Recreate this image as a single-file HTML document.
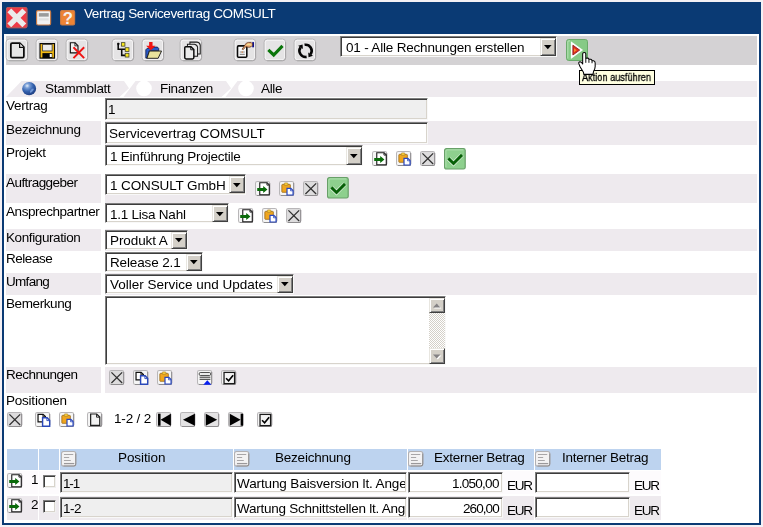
<!DOCTYPE html>
<html><head><meta charset="utf-8"><title>Vertrag Servicevertrag COMSULT</title>
<style>
html,body{margin:0;padding:0}
body{width:763px;height:527px;background:#f4f0f4;position:relative;overflow:hidden;font-family:"Liberation Sans",sans-serif;font-size:13px}
.t{position:absolute;white-space:nowrap;will-change:transform}
svg{overflow:visible}
.sel{position:absolute;box-sizing:border-box;background:#fff;border:1px solid;border-color:#7e7e7e #f8f8f8 #f8f8f8 #7e7e7e;box-shadow:inset 1px 1px 0 #3c3c3c,inset -1px -1px 0 #d8d4cc}
.ddb{position:absolute;box-sizing:border-box;background:#d4d0c8;border:1px solid;border-color:#e8e6e0 #404040 #404040 #e8e6e0;box-shadow:inset 1px 1px 0 #fff,inset -1px -1px 0 #808080}
.track{position:absolute;background-color:#fff;background-image:linear-gradient(45deg,#d4d0c8 25%,transparent 25%,transparent 75%,#d4d0c8 75%),linear-gradient(45deg,#d4d0c8 25%,transparent 25%,transparent 75%,#d4d0c8 75%);background-size:2px 2px;background-position:0 0,1px 1px}
.chk{position:absolute;width:12.5px;height:12.3px;box-sizing:border-box;background:#fff;border:1px solid;border-color:#7e7e7e #f0f0f0 #f0f0f0 #7e7e7e;box-shadow:inset 1px 1px 0 #3c3c3c,inset -1px -1px 0 #d8d4cc}
</style></head><body>
<div style="position:absolute;left:2px;top:2px;width:759px;height:523px;background:#fff;box-sizing:border-box;border:2px solid #0a3a74;"></div>
<div style="position:absolute;left:2px;top:2px;width:759px;height:32px;background:#0a3a74;"></div>
<svg style="position:absolute;left:6.4px;top:7.4px" width="21.4" height="21.2" viewBox="0 0 22 22" preserveAspectRatio="none"><rect x="0.5" y="0.5" width="21" height="21" rx="1.5" fill="#ee3a46" stroke="#bc5656"/><path d="M3.4 3.6 L18.8 19 M18.8 3.6 L3.4 19" stroke="#ebebeb" stroke-width="5.6"/><rect x="0.5" y="0.5" width="21" height="21" rx="1.5" fill="none" stroke="#bc5656"/></svg>
<svg style="position:absolute;left:36.3px;top:10.3px" width="15.2" height="15.6" viewBox="0 0 16 16" preserveAspectRatio="none"><rect x="0.6" y="0.6" width="14.8" height="14.8" rx="1.5" fill="#f2f2f2" stroke="#c87a44" stroke-width="1.2"/><rect x="3" y="3.2" width="10.4" height="3.6" fill="#9a9a9a"/><path d="M3 9.6 H13.4" stroke="#e0e0e0" stroke-width="2.4"/></svg>
<svg style="position:absolute;left:60.4px;top:10.3px" width="15.2" height="15.6" viewBox="0 0 16 16" preserveAspectRatio="none"><rect x="0.6" y="0.6" width="14.8" height="14.8" rx="1.5" fill="#ee8434" stroke="#c87a44" stroke-width="1.2"/><text x="8.3" y="14.4" text-anchor="middle" font-family="Liberation Sans, sans-serif" font-weight="bold" font-size="17.5" fill="#f6f2ee">?</text></svg>
<div class="t" style="left:84.00px;top:5.80px;font-size:13.5px;line-height:16px;color:#fff;letter-spacing:-0.387px;">Vertrag Servicevertrag COMSULT</div>
<div style="position:absolute;left:6px;top:36px;width:751px;height:28.7px;background:#d4d2d4;"></div>
<svg style="position:absolute;left:6.3px;top:39.099999999999994px" width="21.7" height="21.8" viewBox="0 0 21 21" preserveAspectRatio="none"><rect x="0.1" y="0.1" width="20.8" height="20.8" rx="3" fill="#f5f4f5" stroke="#b4b2b4" stroke-width="0.9"/><rect x="1.7" y="1.7" width="17.8" height="17.8" rx="1.6" fill="#e5e4e5"/><path d="M20.9 3 V18 Q20.9 20.9 18 20.9 H3" fill="none" stroke="#a8a6a8" stroke-width="0.9"/><path d="M6 4 H13.4 L17.3 7.9 V16.6 Q17.3 18 15.9 18 H6.1 Q4.7 18 4.7 16.6 V5.4 Q4.7 4 6 4 Z" fill="#e6e6e6" stroke="#0c0c0c" stroke-width="1.7" stroke-linejoin="round"/><path d="M13.2 4.2 V8.1 H17.1" fill="#fff" stroke="#0c0c0c" stroke-width="1.2"/></svg>
<svg style="position:absolute;left:36.2px;top:39.099999999999994px" width="21.7" height="21.8" viewBox="0 0 21 21" preserveAspectRatio="none"><rect x="0.1" y="0.1" width="20.8" height="20.8" rx="3" fill="#f5f4f5" stroke="#b4b2b4" stroke-width="0.9"/><rect x="1.7" y="1.7" width="17.8" height="17.8" rx="1.6" fill="#e5e4e5"/><path d="M20.9 3 V18 Q20.9 20.9 18 20.9 H3" fill="none" stroke="#a8a6a8" stroke-width="0.9"/><rect x="3.9" y="4.4" width="14" height="14" fill="#f6bc14" stroke="#0a0a0a" stroke-width="1.1"/><rect x="6.4" y="5.2" width="9.2" height="6.3" fill="#ececec" stroke="#3a3a3a" stroke-width="0.8"/><rect x="6.2" y="13.6" width="9.6" height="4.8" fill="#050505"/><rect x="13.3" y="14.4" width="2" height="3" fill="#fff"/></svg>
<svg style="position:absolute;left:66.2px;top:39.099999999999994px" width="21.7" height="21.8" viewBox="0 0 21 21" preserveAspectRatio="none"><rect x="0.1" y="0.1" width="20.8" height="20.8" rx="3" fill="#f5f4f5" stroke="#b4b2b4" stroke-width="0.9"/><rect x="1.7" y="1.7" width="17.8" height="17.8" rx="1.6" fill="#e5e4e5"/><path d="M20.9 3 V18 Q20.9 20.9 18 20.9 H3" fill="none" stroke="#a8a6a8" stroke-width="0.9"/><path d="M4.2 3.6 H8.8 L11.6 6.4 V13.4 H4.2 Z" fill="#f0f0f0" stroke="#111" stroke-width="1.1"/><path d="M8.6 3.6 V6.6 H11.6" fill="none" stroke="#111" stroke-width="0.8"/><path d="M7.2 8 L17.6 18.4 M17.6 8 L7.2 18.4" stroke="#f01414" stroke-width="1.9"/></svg>
<svg style="position:absolute;left:112.3px;top:39.099999999999994px" width="21.7" height="21.8" viewBox="0 0 21 21" preserveAspectRatio="none"><rect x="0.1" y="0.1" width="20.8" height="20.8" rx="3" fill="#f5f4f5" stroke="#b4b2b4" stroke-width="0.9"/><rect x="1.7" y="1.7" width="17.8" height="17.8" rx="1.6" fill="#e5e4e5"/><path d="M20.9 3 V18 Q20.9 20.9 18 20.9 H3" fill="none" stroke="#a8a6a8" stroke-width="0.9"/><path d="M6 5.6 V9.8 H13 M9.4 9.8 V15.8 H13" fill="none" stroke="#0a0a0a" stroke-width="1.5"/><rect x="5" y="3.6" width="2.1" height="2.4" rx="0.6" fill="#0a0a0a"/><rect x="9.1" y="3.5" width="3.4" height="3.4" fill="#f8e81c" stroke="#4a4a30" stroke-width="0.8"/><rect x="12.8" y="8.4" width="3.6" height="3.6" fill="#f8e81c" stroke="#4a4a30" stroke-width="0.8"/><rect x="12.8" y="13.8" width="3.6" height="3.6" fill="#f8e81c" stroke="#4a4a30" stroke-width="0.8"/></svg>
<svg style="position:absolute;left:142.29999999999998px;top:39.099999999999994px" width="21.7" height="21.8" viewBox="0 0 21 21" preserveAspectRatio="none"><rect x="0.1" y="0.1" width="20.8" height="20.8" rx="3" fill="#f5f4f5" stroke="#b4b2b4" stroke-width="0.9"/><rect x="1.7" y="1.7" width="17.8" height="17.8" rx="1.6" fill="#e5e4e5"/><path d="M20.9 3 V18 Q20.9 20.9 18 20.9 H3" fill="none" stroke="#a8a6a8" stroke-width="0.9"/><path d="M3.7 18.4 V10.4 L5 9 H10.2 L11.2 7.8 H15 L16.2 9.2 V11.4 H7 L4.8 18.4 Z" fill="#2a5ac8" stroke="#0c1c50" stroke-width="0.8"/><path d="M4.8 18.6 L7.2 11.6 H18.9 L15.6 18.6 Z" fill="#e8e29c" stroke="#1a1a1a" stroke-width="0.9"/><path d="M6.9 3 H10.2 V6.4 H13.1 L8.55 10.9 L4 6.4 H6.9 Z" fill="#f01414"/></svg>
<svg style="position:absolute;left:179.89999999999998px;top:39.099999999999994px" width="21.7" height="21.8" viewBox="0 0 21 21" preserveAspectRatio="none"><rect x="0.1" y="0.1" width="20.8" height="20.8" rx="3" fill="#f5f4f5" stroke="#b4b2b4" stroke-width="0.9"/><rect x="1.7" y="1.7" width="17.8" height="17.8" rx="1.6" fill="#e5e4e5"/><path d="M20.9 3 V18 Q20.9 20.9 18 20.9 H3" fill="none" stroke="#a8a6a8" stroke-width="0.9"/><path d="M9.6 3 H16.4 Q19.4 3.6 19.6 6 V14.4 H9.6 Z" fill="#e8e8e8" stroke="#1a1a1a" stroke-width="1"/><path d="M7.2 5 H14 Q16.8 5.6 17 8 V16.6 H7.2 Z" fill="#e8e8e8" stroke="#1a1a1a" stroke-width="1"/><path d="M5.6 7.4 H10.6 L13.4 10.2 V17.9 Q13.4 19.2 12.1 19.2 H5.9 Q4.6 19.2 4.6 17.9 V8.4 Q4.6 7.4 5.6 7.4 Z" fill="#ebebeb" stroke="#0a0a0a" stroke-width="1.4"/><path d="M10.4 7.6 V10.4 H13.2" fill="none" stroke="#0a0a0a" stroke-width="0.9"/></svg>
<svg style="position:absolute;left:234.29999999999998px;top:39.099999999999994px" width="21.7" height="21.8" viewBox="0 0 21 21" preserveAspectRatio="none"><rect x="0.1" y="0.1" width="20.8" height="20.8" rx="3" fill="#f5f4f5" stroke="#b4b2b4" stroke-width="0.9"/><rect x="1.7" y="1.7" width="17.8" height="17.8" rx="1.6" fill="#e5e4e5"/><path d="M20.9 3 V18 Q20.9 20.9 18 20.9 H3" fill="none" stroke="#a8a6a8" stroke-width="0.9"/><rect x="3.4" y="6.6" width="9" height="11" rx="1" fill="#f8f8f8" stroke="#0a0a0a" stroke-width="1.5"/><path d="M5.6 12.6 H10.4 M5.6 14.8 H10.4" stroke="#8e8e8e" stroke-width="1"/><rect x="7.4" y="12.1" width="1.2" height="1" fill="#e8782a"/><rect x="17.6" y="3" width="1.8" height="5" fill="#12128a"/><path d="M7.9 9.8 L10.6 5.8 Q11.6 3.4 14 3.3 H16.6 Q18.2 4.2 17.8 6 Q17 7.8 14.6 8 L11.4 7.4 L9 10.2 Z" fill="#eeb07a" stroke="#5a2a10" stroke-width="0.7"/><path d="M12.6 5.4 Q15 4.6 17 6" fill="none" stroke="#f4e090" stroke-width="1.2"/></svg>
<svg style="position:absolute;left:264.09999999999997px;top:39.099999999999994px" width="21.7" height="21.8" viewBox="0 0 21 21" preserveAspectRatio="none"><rect x="0.1" y="0.1" width="20.8" height="20.8" rx="3" fill="#f5f4f5" stroke="#b4b2b4" stroke-width="0.9"/><rect x="1.7" y="1.7" width="17.8" height="17.8" rx="1.6" fill="#e5e4e5"/><path d="M20.9 3 V18 Q20.9 20.9 18 20.9 H3" fill="none" stroke="#a8a6a8" stroke-width="0.9"/><path d="M4.2 10.4 L9.4 15.4 L17.9 6.6" fill="none" stroke="#0a750a" stroke-width="3" stroke-linejoin="miter"/></svg>
<svg style="position:absolute;left:294.09999999999997px;top:39.099999999999994px" width="21.7" height="21.8" viewBox="0 0 21 21" preserveAspectRatio="none"><rect x="0.1" y="0.1" width="20.8" height="20.8" rx="3" fill="#f5f4f5" stroke="#b4b2b4" stroke-width="0.9"/><rect x="1.7" y="1.7" width="17.8" height="17.8" rx="1.6" fill="#e5e4e5"/><path d="M20.9 3 V18 Q20.9 20.9 18 20.9 H3" fill="none" stroke="#a8a6a8" stroke-width="0.9"/><path d="M12.2 17.2 A5.9 5.9 0 0 1 6.37 8.02" fill="none" stroke="#050505" stroke-width="2.5"/><path d="M10.2 5.6 A5.9 5.9 0 0 1 16.03 14.78" fill="none" stroke="#050505" stroke-width="2.5"/><path d="M8.3 5.2 L4.0 6.6 L8.6 9.7 Z" fill="#050505"/><path d="M14.1 17.6 L18.4 16.2 L13.8 13.1 Z" fill="#050505"/></svg>
<div class="sel" style="left:340.2px;top:36.2px;width:216.4px;height:20.6px"></div>
<div class="ddb" style="left:539.6px;top:38.1px;width:16.1px;height:17.7px"></div>
<svg style="position:absolute;left:543.5px;top:45.05px" width="7.6" height="4.2" viewBox="0 0 7.6 4.2" preserveAspectRatio="none"><path d="M0 0 H7.6 L3.8 4.2 Z" fill="#000"/></svg>
<div class="t" style="left:345.50px;top:39.80px;font-size:13.5px;line-height:16px;letter-spacing:-0.186px;">01 - Alle Rechnungen erstellen</div>
<svg style="position:absolute;left:566.1px;top:38.9px" width="22" height="22" viewBox="0 0 22 22" preserveAspectRatio="none"><rect x="0.5" y="0.5" width="21" height="21" rx="2.2" fill="#86ca86" stroke="#6aaa6a"/><path d="M1.8 19.5 V3 Q1.8 1.8 3 1.8 H4" fill="none" stroke="#b0deb0" stroke-width="1.2"/><path d="M4.9 2.2 L17.1 11.1 L4.9 20 Z" fill="#fcfcfc"/><path d="M6.9 6.2 L13.7 11.1 L6.9 16 Z" fill="#e42a1a" stroke="#8e2424" stroke-width="0.9"/><path d="M8 9.2 L10.8 11.2 L8 13.2 Z" fill="#f08a30"/></svg>
<div style="position:absolute;left:6px;top:80.8px;width:751px;height:16px;background:#eeeaee;"></div>
<svg style="position:absolute;left:6px;top:80.8px" width="17" height="16" viewBox="0 0 17 16" preserveAspectRatio="none"><path d="M0 0 H15.5 L0 16 Z" fill="#fff"/></svg>
<svg style="position:absolute;left:21.8px;top:81.8px" width="14.3" height="13.4" viewBox="0 0 14.3 13.4" preserveAspectRatio="none"><defs><radialGradient id="sg" cx="0.36" cy="0.28" r="0.78"><stop offset="0" stop-color="#e4eefa"/><stop offset="0.22" stop-color="#7a9ed6"/><stop offset="0.55" stop-color="#3462ae"/><stop offset="1" stop-color="#1c3a7c"/></radialGradient></defs><ellipse cx="7.15" cy="6.7" rx="7" ry="6.6" fill="url(#sg)"/><ellipse cx="9.8" cy="8.6" rx="2.6" ry="1.1" transform="rotate(-48 9.8 8.6)" fill="#86aae4" opacity="0.75"/></svg>
<svg style="position:absolute;left:118px;top:80.8px" width="36" height="16" viewBox="0 0 36 16"><path d="M1.5 16 L5.5 16 L17.5 0 L6 0 L11 7.2 Z" fill="#fff"/><circle cx="26" cy="7.4" r="7.8" fill="#fff"/></svg>
<svg style="position:absolute;left:220px;top:80.8px" width="36" height="16" viewBox="0 0 36 16"><path d="M1.5 16 L5.5 16 L17.5 0 L6 0 L11 7.2 Z" fill="#fff"/><circle cx="26" cy="7.4" r="7.8" fill="#fff"/></svg>
<div class="t" style="left:45.00px;top:80.80px;font-size:13.5px;line-height:16px;letter-spacing:-0.269px;">Stammblatt</div>
<div class="t" style="left:159.80px;top:80.80px;font-size:13.5px;line-height:16px;letter-spacing:-0.333px;">Finanzen</div>
<div class="t" style="left:261.10px;top:80.80px;font-size:13.5px;line-height:16px;letter-spacing:-0.334px;">Alle</div>
<div style="position:absolute;left:6px;top:120.8px;width:95px;height:23.8px;background:#eeeaee;"></div>
<div style="position:absolute;left:105px;top:120.8px;width:652px;height:23.8px;background:#eeeaee;"></div>
<div style="position:absolute;left:6px;top:173.9px;width:95px;height:28.7px;background:#eeeaee;"></div>
<div style="position:absolute;left:105px;top:173.9px;width:652px;height:28.7px;background:#eeeaee;"></div>
<div style="position:absolute;left:6px;top:229px;width:95px;height:21.6px;background:#eeeaee;"></div>
<div style="position:absolute;left:105px;top:229px;width:652px;height:21.6px;background:#eeeaee;"></div>
<div style="position:absolute;left:6px;top:272.8px;width:95px;height:21.8px;background:#eeeaee;"></div>
<div style="position:absolute;left:105px;top:272.8px;width:652px;height:21.8px;background:#eeeaee;"></div>
<div style="position:absolute;left:6px;top:366.8px;width:95px;height:25.8px;background:#eeeaee;"></div>
<div style="position:absolute;left:105px;top:366.8px;width:652px;height:25.8px;background:#eeeaee;"></div>
<div class="t" style="left:6.10px;top:97.80px;font-size:13.5px;line-height:16px;letter-spacing:-0.303px;">Vertrag</div>
<div class="t" style="left:5.90px;top:121.80px;font-size:13.5px;line-height:16px;letter-spacing:-0.305px;">Bezeichnung</div>
<div class="t" style="left:5.90px;top:144.80px;font-size:13.5px;line-height:16px;letter-spacing:-0.344px;">Projekt</div>
<div class="t" style="left:6.30px;top:174.80px;font-size:13.5px;line-height:16px;letter-spacing:-0.560px;">Auftraggeber</div>
<div class="t" style="left:6.30px;top:203.80px;font-size:13.5px;line-height:16px;letter-spacing:-0.436px;">Ansprechpartner</div>
<div class="t" style="left:5.90px;top:229.80px;font-size:13.5px;line-height:16px;letter-spacing:-0.396px;">Konfiguration</div>
<div class="t" style="left:5.90px;top:250.80px;font-size:13.5px;line-height:16px;letter-spacing:-0.470px;">Release</div>
<div class="t" style="left:5.90px;top:273.80px;font-size:13.5px;line-height:16px;letter-spacing:-0.692px;">Umfang</div>
<div class="t" style="left:5.90px;top:295.80px;font-size:13.5px;line-height:16px;letter-spacing:-0.403px;">Bemerkung</div>
<div class="t" style="left:5.80px;top:366.80px;font-size:13.5px;line-height:16px;letter-spacing:-0.495px;">Rechnungen</div>
<div class="t" style="left:5.80px;top:392.80px;font-size:13.5px;line-height:16px;letter-spacing:-0.226px;">Positionen</div>
<div class="sel" style="left:105.1px;top:97.9px;width:322.8px;height:21.8px;background:#efefef"></div>
<div class="t" style="left:107.80px;top:101.80px;font-size:13.5px;line-height:16px;">1</div>
<div class="sel" style="left:105.1px;top:121.8px;width:322.8px;height:22.2px;background:#fff"></div>
<div class="t" style="left:108.50px;top:125.80px;font-size:13.5px;line-height:16px;letter-spacing:-0.007px;">Servicevertrag COMSULT</div>
<div class="sel" style="left:105.1px;top:145px;width:258.1px;height:21px"></div>
<div class="ddb" style="left:346.2px;top:146.9px;width:16.1px;height:18.1px"></div>
<svg style="position:absolute;left:350.1px;top:154.05px" width="7.6" height="4.2" viewBox="0 0 7.6 4.2" preserveAspectRatio="none"><path d="M0 0 H7.6 L3.8 4.2 Z" fill="#000"/></svg>
<div class="t" style="left:109.90px;top:148.80px;font-size:13.5px;line-height:16px;letter-spacing:-0.228px;">1 Einführung Projectile</div>
<svg style="position:absolute;left:372.1px;top:151.3px" width="15.2" height="15" viewBox="0 0 15 15" preserveAspectRatio="none"><rect x="0.5" y="0.5" width="14" height="14" rx="1.8" fill="#f5f5f5" stroke="#b8b6b8"/><path d="M14.5 2 V13 Q14.5 14.5 13 14.5 H2" fill="none" stroke="#8e8c8e"/><path d="M4.7 1.8 H12 L14.1 3.9 V13.7 H4.7 Z" fill="#fff" stroke="#1c1c1c" stroke-width="1.1"/><path d="M11.8 1.8 V4.1 H14.1" fill="none" stroke="#1c1c1c" stroke-width="0.9"/><path d="M2.2 7 H8.1 V4.9 L12.3 8.5 L8.1 12.1 V10 H2.2 Z" fill="#0a6a0a"/></svg>
<svg style="position:absolute;left:396.3px;top:151.3px" width="15.2" height="15" viewBox="0 0 15 15" preserveAspectRatio="none"><rect x="0.5" y="0.5" width="14" height="14" rx="1.8" fill="#f5f5f5" stroke="#b8b6b8"/><path d="M14.5 2 V13 Q14.5 14.5 13 14.5 H2" fill="none" stroke="#8e8c8e"/><rect x="2.8" y="3.4" width="8.4" height="7.9" rx="0.6" fill="#f0a61e" stroke="#9a6a18" stroke-width="0.8"/><rect x="5.2" y="1.9" width="3.6" height="2.5" rx="0.6" fill="#f6cc3a" stroke="#a87a20" stroke-width="0.6"/><path d="M7.9 7.3 H11.7 L13.9 9.5 V14 H7.9 Z" fill="#fff" stroke="#2a48c0" stroke-width="1.2"/><path d="M11.4 7.5 V9.8 H13.7" fill="none" stroke="#2a48c0" stroke-width="0.8"/></svg>
<svg style="position:absolute;left:420.4px;top:151.3px" width="15.2" height="15" viewBox="0 0 15 15" preserveAspectRatio="none"><rect x="0.5" y="0.5" width="14" height="14" rx="1.8" fill="#dddcdd" stroke="#b8b6b8"/><path d="M14.5 2 V13 Q14.5 14.5 13 14.5 H2" fill="none" stroke="#8e8c8e"/><path d="M2.4 2.4 L13 13 M13 2.4 L2.4 13" stroke="#303030" stroke-width="1.25"/></svg>
<svg style="position:absolute;left:444.2px;top:148px" width="21.8" height="21.6" viewBox="0 0 22 22" preserveAspectRatio="none"><rect x="0.6" y="0.6" width="20.8" height="20.8" rx="1.8" fill="#8ed08e" stroke="#68a068" stroke-width="1.2"/><path d="M1.9 19.6 V3 Q1.9 1.9 3 1.9 H19.6" fill="none" stroke="#b2e2b2"/><path d="M4.4 10.6 L9.6 15.8 L18.2 7" fill="none" stroke="#f4fbf4" stroke-width="4.3" stroke-opacity="0.9"/><path d="M4.4 10.6 L9.6 15.8 L18.2 7" fill="none" stroke="#066006" stroke-width="3"/></svg>
<div class="sel" style="left:105.1px;top:174px;width:141px;height:20.5px"></div>
<div class="ddb" style="left:229.1px;top:175.9px;width:16.1px;height:17.6px"></div>
<svg style="position:absolute;left:233.0px;top:182.8px" width="7.6" height="4.2" viewBox="0 0 7.6 4.2" preserveAspectRatio="none"><path d="M0 0 H7.6 L3.8 4.2 Z" fill="#000"/></svg>
<div class="t" style="left:109.90px;top:177.80px;font-size:13.5px;line-height:16px;letter-spacing:-0.121px;">1 CONSULT GmbH</div>
<svg style="position:absolute;left:255px;top:180.5px" width="15.2" height="15" viewBox="0 0 15 15" preserveAspectRatio="none"><rect x="0.5" y="0.5" width="14" height="14" rx="1.8" fill="#f5f5f5" stroke="#b8b6b8"/><path d="M14.5 2 V13 Q14.5 14.5 13 14.5 H2" fill="none" stroke="#8e8c8e"/><path d="M4.7 1.8 H12 L14.1 3.9 V13.7 H4.7 Z" fill="#fff" stroke="#1c1c1c" stroke-width="1.1"/><path d="M11.8 1.8 V4.1 H14.1" fill="none" stroke="#1c1c1c" stroke-width="0.9"/><path d="M2.2 7 H8.1 V4.9 L12.3 8.5 L8.1 12.1 V10 H2.2 Z" fill="#0a6a0a"/></svg>
<svg style="position:absolute;left:279.2px;top:180.5px" width="15.2" height="15" viewBox="0 0 15 15" preserveAspectRatio="none"><rect x="0.5" y="0.5" width="14" height="14" rx="1.8" fill="#f5f5f5" stroke="#b8b6b8"/><path d="M14.5 2 V13 Q14.5 14.5 13 14.5 H2" fill="none" stroke="#8e8c8e"/><rect x="2.8" y="3.4" width="8.4" height="7.9" rx="0.6" fill="#f0a61e" stroke="#9a6a18" stroke-width="0.8"/><rect x="5.2" y="1.9" width="3.6" height="2.5" rx="0.6" fill="#f6cc3a" stroke="#a87a20" stroke-width="0.6"/><path d="M7.9 7.3 H11.7 L13.9 9.5 V14 H7.9 Z" fill="#fff" stroke="#2a48c0" stroke-width="1.2"/><path d="M11.4 7.5 V9.8 H13.7" fill="none" stroke="#2a48c0" stroke-width="0.8"/></svg>
<svg style="position:absolute;left:303.2px;top:180.5px" width="15.2" height="15" viewBox="0 0 15 15" preserveAspectRatio="none"><rect x="0.5" y="0.5" width="14" height="14" rx="1.8" fill="#dddcdd" stroke="#b8b6b8"/><path d="M14.5 2 V13 Q14.5 14.5 13 14.5 H2" fill="none" stroke="#8e8c8e"/><path d="M2.4 2.4 L13 13 M13 2.4 L2.4 13" stroke="#303030" stroke-width="1.25"/></svg>
<svg style="position:absolute;left:327px;top:177.2px" width="21.8" height="21.6" viewBox="0 0 22 22" preserveAspectRatio="none"><rect x="0.6" y="0.6" width="20.8" height="20.8" rx="1.8" fill="#8ed08e" stroke="#68a068" stroke-width="1.2"/><path d="M1.9 19.6 V3 Q1.9 1.9 3 1.9 H19.6" fill="none" stroke="#b2e2b2"/><path d="M4.4 10.6 L9.6 15.8 L18.2 7" fill="none" stroke="#f4fbf4" stroke-width="4.3" stroke-opacity="0.9"/><path d="M4.4 10.6 L9.6 15.8 L18.2 7" fill="none" stroke="#066006" stroke-width="3"/></svg>
<div class="sel" style="left:105.1px;top:203.3px;width:123.6px;height:20.2px"></div>
<div class="ddb" style="left:211.7px;top:205.2px;width:16.1px;height:17.3px"></div>
<svg style="position:absolute;left:215.6px;top:211.95px" width="7.6" height="4.2" viewBox="0 0 7.6 4.2" preserveAspectRatio="none"><path d="M0 0 H7.6 L3.8 4.2 Z" fill="#000"/></svg>
<div class="t" style="left:109.60px;top:206.80px;font-size:13.5px;line-height:16px;letter-spacing:-0.242px;">1.1 Lisa Nahl</div>
<svg style="position:absolute;left:238.2px;top:208.2px" width="15.2" height="15" viewBox="0 0 15 15" preserveAspectRatio="none"><rect x="0.5" y="0.5" width="14" height="14" rx="1.8" fill="#f5f5f5" stroke="#b8b6b8"/><path d="M14.5 2 V13 Q14.5 14.5 13 14.5 H2" fill="none" stroke="#8e8c8e"/><path d="M4.7 1.8 H12 L14.1 3.9 V13.7 H4.7 Z" fill="#fff" stroke="#1c1c1c" stroke-width="1.1"/><path d="M11.8 1.8 V4.1 H14.1" fill="none" stroke="#1c1c1c" stroke-width="0.9"/><path d="M2.2 7 H8.1 V4.9 L12.3 8.5 L8.1 12.1 V10 H2.2 Z" fill="#0a6a0a"/></svg>
<svg style="position:absolute;left:262.3px;top:208.2px" width="15.2" height="15" viewBox="0 0 15 15" preserveAspectRatio="none"><rect x="0.5" y="0.5" width="14" height="14" rx="1.8" fill="#f5f5f5" stroke="#b8b6b8"/><path d="M14.5 2 V13 Q14.5 14.5 13 14.5 H2" fill="none" stroke="#8e8c8e"/><rect x="2.8" y="3.4" width="8.4" height="7.9" rx="0.6" fill="#f0a61e" stroke="#9a6a18" stroke-width="0.8"/><rect x="5.2" y="1.9" width="3.6" height="2.5" rx="0.6" fill="#f6cc3a" stroke="#a87a20" stroke-width="0.6"/><path d="M7.9 7.3 H11.7 L13.9 9.5 V14 H7.9 Z" fill="#fff" stroke="#2a48c0" stroke-width="1.2"/><path d="M11.4 7.5 V9.8 H13.7" fill="none" stroke="#2a48c0" stroke-width="0.8"/></svg>
<svg style="position:absolute;left:286.4px;top:208.2px" width="15.2" height="15" viewBox="0 0 15 15" preserveAspectRatio="none"><rect x="0.5" y="0.5" width="14" height="14" rx="1.8" fill="#dddcdd" stroke="#b8b6b8"/><path d="M14.5 2 V13 Q14.5 14.5 13 14.5 H2" fill="none" stroke="#8e8c8e"/><path d="M2.4 2.4 L13 13 M13 2.4 L2.4 13" stroke="#303030" stroke-width="1.25"/></svg>
<div class="sel" style="left:105.1px;top:229.7px;width:82.7px;height:20px"></div>
<div class="ddb" style="left:170.8px;top:231.6px;width:16.1px;height:17.1px"></div>
<svg style="position:absolute;left:174.7px;top:238.25px" width="7.6" height="4.2" viewBox="0 0 7.6 4.2" preserveAspectRatio="none"><path d="M0 0 H7.6 L3.8 4.2 Z" fill="#000"/></svg>
<div class="t" style="left:109.60px;top:232.80px;font-size:13.5px;line-height:16px;letter-spacing:-0.084px;">Produkt A</div>
<div class="sel" style="left:105.1px;top:251.9px;width:97.5px;height:20px"></div>
<div class="ddb" style="left:185.6px;top:253.8px;width:16.1px;height:17.1px"></div>
<svg style="position:absolute;left:189.5px;top:260.45px" width="7.6" height="4.2" viewBox="0 0 7.6 4.2" preserveAspectRatio="none"><path d="M0 0 H7.6 L3.8 4.2 Z" fill="#000"/></svg>
<div class="t" style="left:109.60px;top:254.80px;font-size:13.5px;line-height:16px;letter-spacing:-0.134px;">Release 2.1</div>
<div class="sel" style="left:105.1px;top:273.7px;width:188.5px;height:20px"></div>
<div class="ddb" style="left:276.6px;top:275.6px;width:16.1px;height:17.1px"></div>
<svg style="position:absolute;left:280.5px;top:282.25px" width="7.6" height="4.2" viewBox="0 0 7.6 4.2" preserveAspectRatio="none"><path d="M0 0 H7.6 L3.8 4.2 Z" fill="#000"/></svg>
<div class="t" style="left:109.80px;top:276.80px;font-size:13.5px;line-height:16px;">Voller Service und Updates</div>
<div class="sel" style="left:105.1px;top:296px;width:341px;height:69.2px;background:#fff"></div>
<div class="track" style="left:429.2px;top:297.8px;width:15.6px;height:66px"></div>
<div class="ddb" style="left:429.2px;top:297.8px;width:15.6px;height:15.6px"></div>
<div class="ddb" style="left:429.2px;top:348.2px;width:15.6px;height:15.6px"></div>
<svg style="position:absolute;left:433px;top:303px" width="9" height="6" viewBox="0 0 9 6" preserveAspectRatio="none"><path d="M1 5.6 H8.4 L4.7 1.4 Z" fill="#fff"/><path d="M0 4.6 H7.4 L3.7 0.4 Z" fill="#848284"/></svg>
<svg style="position:absolute;left:433px;top:353.6px" width="9" height="6" viewBox="0 0 9 6" preserveAspectRatio="none"><path d="M1 1.4 H8.4 L4.7 5.6 Z" fill="#fff"/><path d="M0 0.4 H7.4 L3.7 4.6 Z" fill="#848284"/></svg>
<svg style="position:absolute;left:109.2px;top:369.8px" width="15.2" height="15" viewBox="0 0 15 15" preserveAspectRatio="none"><rect x="0.5" y="0.5" width="14" height="14" rx="1.8" fill="#dddcdd" stroke="#b8b6b8"/><path d="M14.5 2 V13 Q14.5 14.5 13 14.5 H2" fill="none" stroke="#8e8c8e"/><path d="M2.4 2.4 L13 13 M13 2.4 L2.4 13" stroke="#303030" stroke-width="1.25"/></svg>
<svg style="position:absolute;left:133.2px;top:369.8px" width="15.2" height="15" viewBox="0 0 15 15" preserveAspectRatio="none"><rect x="0.5" y="0.5" width="14" height="14" rx="1.8" fill="#f5f5f5" stroke="#b8b6b8"/><path d="M14.5 2 V13 Q14.5 14.5 13 14.5 H2" fill="none" stroke="#8e8c8e"/><path d="M3 2.3 H8 L10.3 4.6 V9.9 H3 Z" fill="#fff" stroke="#111" stroke-width="1.2"/><path d="M7.8 2.3 V4.8 H10.3" fill="none" stroke="#111" stroke-width="0.9"/><path d="M7.5 5.8 H12 L14.5 8.3 V14.2 H7.5 Z" fill="#fff" stroke="#2a48b8" stroke-width="1.4"/><path d="M11.7 6 V8.6 H14.3" fill="none" stroke="#2a48b8" stroke-width="0.9"/></svg>
<svg style="position:absolute;left:157.2px;top:369.8px" width="15.2" height="15" viewBox="0 0 15 15" preserveAspectRatio="none"><rect x="0.5" y="0.5" width="14" height="14" rx="1.8" fill="#f5f5f5" stroke="#b8b6b8"/><path d="M14.5 2 V13 Q14.5 14.5 13 14.5 H2" fill="none" stroke="#8e8c8e"/><rect x="2.8" y="3.4" width="8.4" height="7.9" rx="0.6" fill="#f0a61e" stroke="#9a6a18" stroke-width="0.8"/><rect x="5.2" y="1.9" width="3.6" height="2.5" rx="0.6" fill="#f6cc3a" stroke="#a87a20" stroke-width="0.6"/><path d="M7.9 7.3 H11.7 L13.9 9.5 V14 H7.9 Z" fill="#fff" stroke="#2a48c0" stroke-width="1.2"/><path d="M11.4 7.5 V9.8 H13.7" fill="none" stroke="#2a48c0" stroke-width="0.8"/></svg>
<svg style="position:absolute;left:197px;top:369.8px" width="15.2" height="15" viewBox="0 0 15 15" preserveAspectRatio="none"><rect x="0.5" y="0.5" width="14" height="14" rx="1.8" fill="#f5f5f5" stroke="#b8b6b8"/><path d="M14.5 2 V13 Q14.5 14.5 13 14.5 H2" fill="none" stroke="#8e8c8e"/><rect x="2.2" y="2.6" width="11.2" height="2.8" rx="1" fill="#fff" stroke="#2a2a2a" stroke-width="0.9"/><path d="M2.6 7.2 H13.2 M2.6 9.3 H13.2" stroke="#1c1c1c" stroke-width="0.9"/><path d="M10.2 10.2 L14.2 14.8 H6.2 Z" fill="#0820f0"/></svg>
<svg style="position:absolute;left:221px;top:369.8px" width="15.2" height="15" viewBox="0 0 15 15" preserveAspectRatio="none"><rect x="0.5" y="0.5" width="14" height="14" rx="1.8" fill="#f5f5f5" stroke="#b8b6b8"/><path d="M14.5 2 V13 Q14.5 14.5 13 14.5 H2" fill="none" stroke="#8e8c8e"/><rect x="3" y="2.4" width="10.4" height="11.2" fill="#f4f4f4" stroke="#1a1a1a" stroke-width="1.25"/><path d="M5 8.3 L7.5 10.8 L12 5.2" fill="none" stroke="#000" stroke-width="1.6"/></svg>
<svg style="position:absolute;left:7.2px;top:412.3px" width="15.2" height="15" viewBox="0 0 15 15" preserveAspectRatio="none"><rect x="0.5" y="0.5" width="14" height="14" rx="1.8" fill="#dddcdd" stroke="#b8b6b8"/><path d="M14.5 2 V13 Q14.5 14.5 13 14.5 H2" fill="none" stroke="#8e8c8e"/><path d="M2.4 2.4 L13 13 M13 2.4 L2.4 13" stroke="#303030" stroke-width="1.25"/></svg>
<svg style="position:absolute;left:35.2px;top:412.3px" width="15.2" height="15" viewBox="0 0 15 15" preserveAspectRatio="none"><rect x="0.5" y="0.5" width="14" height="14" rx="1.8" fill="#f5f5f5" stroke="#b8b6b8"/><path d="M14.5 2 V13 Q14.5 14.5 13 14.5 H2" fill="none" stroke="#8e8c8e"/><path d="M3 2.3 H8 L10.3 4.6 V9.9 H3 Z" fill="#fff" stroke="#111" stroke-width="1.2"/><path d="M7.8 2.3 V4.8 H10.3" fill="none" stroke="#111" stroke-width="0.9"/><path d="M7.5 5.8 H12 L14.5 8.3 V14.2 H7.5 Z" fill="#fff" stroke="#2a48b8" stroke-width="1.4"/><path d="M11.7 6 V8.6 H14.3" fill="none" stroke="#2a48b8" stroke-width="0.9"/></svg>
<svg style="position:absolute;left:59.3px;top:412.3px" width="15.2" height="15" viewBox="0 0 15 15" preserveAspectRatio="none"><rect x="0.5" y="0.5" width="14" height="14" rx="1.8" fill="#f5f5f5" stroke="#b8b6b8"/><path d="M14.5 2 V13 Q14.5 14.5 13 14.5 H2" fill="none" stroke="#8e8c8e"/><rect x="2.8" y="3.4" width="8.4" height="7.9" rx="0.6" fill="#f0a61e" stroke="#9a6a18" stroke-width="0.8"/><rect x="5.2" y="1.9" width="3.6" height="2.5" rx="0.6" fill="#f6cc3a" stroke="#a87a20" stroke-width="0.6"/><path d="M7.9 7.3 H11.7 L13.9 9.5 V14 H7.9 Z" fill="#fff" stroke="#2a48c0" stroke-width="1.2"/><path d="M11.4 7.5 V9.8 H13.7" fill="none" stroke="#2a48c0" stroke-width="0.8"/></svg>
<svg style="position:absolute;left:87.4px;top:412.3px" width="15.2" height="15" viewBox="0 0 15 15" preserveAspectRatio="none"><rect x="0.5" y="0.5" width="14" height="14" rx="1.8" fill="#f5f5f5" stroke="#b8b6b8"/><path d="M14.5 2 V13 Q14.5 14.5 13 14.5 H2" fill="none" stroke="#8e8c8e"/><path d="M3.6 2 H9.6 L12.6 5 V13.4 H3.6 Z" fill="#f2f2f2" stroke="#1c1c1c" stroke-width="1.2"/><path d="M9.4 2 V5.2 H12.6" fill="none" stroke="#1c1c1c" stroke-width="0.9"/></svg>
<svg style="position:absolute;left:156.4px;top:412.3px" width="15.2" height="15" viewBox="0 0 15 15" preserveAspectRatio="none"><rect x="0.5" y="0.5" width="14" height="14" rx="1.8" fill="#e4e3e4" stroke="#b8b6b8"/><path d="M14.5 2 V13 Q14.5 14.5 13 14.5 H2" fill="none" stroke="#8e8c8e"/><rect x="2" y="1.7" width="2.5" height="12" fill="#000"/><path d="M14.7 1.7 V13.7 L4.5 7.7 Z" fill="#000"/></svg>
<svg style="position:absolute;left:180.3px;top:412.3px" width="15.2" height="15" viewBox="0 0 15 15" preserveAspectRatio="none"><rect x="0.5" y="0.5" width="14" height="14" rx="1.8" fill="#e4e3e4" stroke="#b8b6b8"/><path d="M14.5 2 V13 Q14.5 14.5 13 14.5 H2" fill="none" stroke="#8e8c8e"/><path d="M14.7 1.7 V13.7 L2.9 7.7 Z" fill="#000"/></svg>
<svg style="position:absolute;left:204.4px;top:412.3px" width="15.2" height="15" viewBox="0 0 15 15" preserveAspectRatio="none"><rect x="0.5" y="0.5" width="14" height="14" rx="1.8" fill="#e4e3e4" stroke="#b8b6b8"/><path d="M14.5 2 V13 Q14.5 14.5 13 14.5 H2" fill="none" stroke="#8e8c8e"/><path d="M1.7 1.7 V13.7 L13 7.7 Z" fill="#000"/></svg>
<svg style="position:absolute;left:228.4px;top:412.3px" width="15.2" height="15" viewBox="0 0 15 15" preserveAspectRatio="none"><rect x="0.5" y="0.5" width="14" height="14" rx="1.8" fill="#e4e3e4" stroke="#b8b6b8"/><path d="M14.5 2 V13 Q14.5 14.5 13 14.5 H2" fill="none" stroke="#8e8c8e"/><rect x="12.5" y="1.7" width="2.5" height="12" fill="#000"/><path d="M1.7 1.7 V13.7 L12.5 7.7 Z" fill="#000"/></svg>
<svg style="position:absolute;left:256.5px;top:412.3px" width="15.2" height="15" viewBox="0 0 15 15" preserveAspectRatio="none"><rect x="0.5" y="0.5" width="14" height="14" rx="1.8" fill="#f5f5f5" stroke="#b8b6b8"/><path d="M14.5 2 V13 Q14.5 14.5 13 14.5 H2" fill="none" stroke="#8e8c8e"/><rect x="3" y="2.4" width="10.4" height="11.2" fill="#f4f4f4" stroke="#1a1a1a" stroke-width="1.25"/><path d="M5 8.3 L7.5 10.8 L12 5.2" fill="none" stroke="#000" stroke-width="1.6"/></svg>
<div class="t" style="left:114.20px;top:410.80px;font-size:13.5px;line-height:16px;letter-spacing:-0.161px;">1-2 / 2</div>
<div style="position:absolute;left:6.9px;top:449px;width:30.7px;height:20.8px;background:#bdd3ef;"></div>
<div style="position:absolute;left:39.3px;top:449px;width:19.3px;height:20.8px;background:#bdd3ef;"></div>
<div style="position:absolute;left:60.3px;top:449px;width:172.6px;height:20.8px;background:#bdd3ef;"></div>
<div style="position:absolute;left:234px;top:449px;width:172.9px;height:20.8px;background:#bdd3ef;"></div>
<div style="position:absolute;left:408.1px;top:449px;width:125.8px;height:20.8px;background:#bdd3ef;"></div>
<div style="position:absolute;left:535.1px;top:449px;width:126.1px;height:20.8px;background:#bdd3ef;"></div>
<svg style="position:absolute;left:60.5px;top:451px" width="15.3" height="15.6" viewBox="0 0 15 15" preserveAspectRatio="none"><rect x="0.5" y="0.5" width="14" height="14" rx="2" fill="#f3f2f3" stroke="#b2b0b2"/><path d="M14.5 2.4 V12.6 Q14.5 14.5 12.6 14.5 H2.4" fill="none" stroke="#8e8c8e"/><path d="M2.9 3.3 H12 M2.9 6.3 H8 M2.9 9.2 H9.6" stroke="#a8a6a8" stroke-width="1"/><path d="M2.9 12.1 H13" stroke="#9a989a" stroke-width="1.2"/></svg>
<svg style="position:absolute;left:234.3px;top:451px" width="15.3" height="15.6" viewBox="0 0 15 15" preserveAspectRatio="none"><rect x="0.5" y="0.5" width="14" height="14" rx="2" fill="#f3f2f3" stroke="#b2b0b2"/><path d="M14.5 2.4 V12.6 Q14.5 14.5 12.6 14.5 H2.4" fill="none" stroke="#8e8c8e"/><path d="M2.9 3.3 H12 M2.9 6.3 H8 M2.9 9.2 H9.6" stroke="#a8a6a8" stroke-width="1"/><path d="M2.9 12.1 H13" stroke="#9a989a" stroke-width="1.2"/></svg>
<svg style="position:absolute;left:408.3px;top:451px" width="15.3" height="15.6" viewBox="0 0 15 15" preserveAspectRatio="none"><rect x="0.5" y="0.5" width="14" height="14" rx="2" fill="#f3f2f3" stroke="#b2b0b2"/><path d="M14.5 2.4 V12.6 Q14.5 14.5 12.6 14.5 H2.4" fill="none" stroke="#8e8c8e"/><path d="M2.9 3.3 H12 M2.9 6.3 H8 M2.9 9.2 H9.6" stroke="#a8a6a8" stroke-width="1"/><path d="M2.9 12.1 H13" stroke="#9a989a" stroke-width="1.2"/></svg>
<svg style="position:absolute;left:535.3px;top:451px" width="15.3" height="15.6" viewBox="0 0 15 15" preserveAspectRatio="none"><rect x="0.5" y="0.5" width="14" height="14" rx="2" fill="#f3f2f3" stroke="#b2b0b2"/><path d="M14.5 2.4 V12.6 Q14.5 14.5 12.6 14.5 H2.4" fill="none" stroke="#8e8c8e"/><path d="M2.9 3.3 H12 M2.9 6.3 H8 M2.9 9.2 H9.6" stroke="#a8a6a8" stroke-width="1"/><path d="M2.9 12.1 H13" stroke="#9a989a" stroke-width="1.2"/></svg>
<div class="t" style="left:117.60px;top:449.80px;font-size:13.5px;line-height:16px;letter-spacing:-0.089px;">Position</div>
<div class="t" style="left:275.30px;top:449.80px;font-size:13.5px;line-height:16px;letter-spacing:-0.215px;">Bezeichnung</div>
<div class="t" style="left:433.70px;top:449.80px;font-size:13.5px;line-height:16px;letter-spacing:-0.267px;">Externer Betrag</div>
<div class="t" style="left:561.70px;top:449.80px;font-size:13.5px;line-height:16px;letter-spacing:-0.260px;">Interner Betrag</div>
<div style="position:absolute;left:6.9px;top:471.4px;width:30.7px;height:22.4px;background:#fdfbfd;"></div>
<div style="position:absolute;left:6.9px;top:495.8px;width:30.7px;height:23.8px;background:#eeeaee;"></div>
<div style="position:absolute;left:39.3px;top:471.4px;width:19.3px;height:22.4px;background:#fdfbfd;"></div>
<div style="position:absolute;left:39.3px;top:495.8px;width:19.3px;height:23.8px;background:#eeeaee;"></div>
<div style="position:absolute;left:60.3px;top:471.4px;width:172.6px;height:22.4px;background:#fdfbfd;"></div>
<div style="position:absolute;left:60.3px;top:495.8px;width:172.6px;height:23.8px;background:#eeeaee;"></div>
<div style="position:absolute;left:234px;top:471.4px;width:172.9px;height:22.4px;background:#fdfbfd;"></div>
<div style="position:absolute;left:234px;top:495.8px;width:172.9px;height:23.8px;background:#eeeaee;"></div>
<div style="position:absolute;left:408.1px;top:471.4px;width:125.8px;height:22.4px;background:#fdfbfd;"></div>
<div style="position:absolute;left:408.1px;top:495.8px;width:125.8px;height:23.8px;background:#eeeaee;"></div>
<div style="position:absolute;left:535.1px;top:471.4px;width:126.1px;height:22.4px;background:#fdfbfd;"></div>
<div style="position:absolute;left:535.1px;top:495.8px;width:126.1px;height:23.8px;background:#eeeaee;"></div>
<svg style="position:absolute;left:7.3px;top:473.4px" width="15.2" height="15" viewBox="0 0 15 15" preserveAspectRatio="none"><rect x="0.5" y="0.5" width="14" height="14" rx="1.8" fill="#f5f5f5" stroke="#b8b6b8"/><path d="M14.5 2 V13 Q14.5 14.5 13 14.5 H2" fill="none" stroke="#8e8c8e"/><path d="M4.7 1.8 H12 L14.1 3.9 V13.7 H4.7 Z" fill="#fff" stroke="#1c1c1c" stroke-width="1.1"/><path d="M11.8 1.8 V4.1 H14.1" fill="none" stroke="#1c1c1c" stroke-width="0.9"/><path d="M2.2 7 H8.1 V4.9 L12.3 8.5 L8.1 12.1 V10 H2.2 Z" fill="#0a6a0a"/></svg>
<div class="t" style="left:30.80px;top:471.80px;font-size:13.5px;line-height:16px;">1</div>
<div class="chk" style="left:43px;top:475.4px"></div>
<div class="sel" style="left:60.3px;top:472.2px;width:172.4px;height:21.2px;background:#efefef"></div>
<div class="t" style="left:62.60px;top:475.80px;font-size:13.5px;line-height:16px;letter-spacing:-1.152px;">1-1</div>
<div class="sel" style="left:234.2px;top:472.2px;width:172.6px;height:21.2px;background:#fff"></div>
<div class="t" style="left:237.10px;top:475.80px;font-size:13.5px;line-height:16px;letter-spacing:-0.114px;width:168.10px;overflow:hidden;">Wartung Baisversion lt. Angebot</div>
<div class="sel" style="left:408.3px;top:472.2px;width:94.3px;height:21.2px;background:#fff"></div>
<div class="t" style="left:452.20px;top:475.80px;font-size:13.5px;line-height:16px;letter-spacing:-0.735px;">1.050,00</div>
<div class="t" style="left:506.70px;top:477.80px;font-size:13.5px;line-height:16px;letter-spacing:-1.227px;">EUR</div>
<div class="sel" style="left:535.3px;top:472.2px;width:94.6px;height:21.2px;background:#fff"></div>
<div class="t" style="left:634.20px;top:477.80px;font-size:13.5px;line-height:16px;letter-spacing:-1.277px;">EUR</div>
<svg style="position:absolute;left:7.3px;top:498.4px" width="15.2" height="15" viewBox="0 0 15 15" preserveAspectRatio="none"><rect x="0.5" y="0.5" width="14" height="14" rx="1.8" fill="#f5f5f5" stroke="#b8b6b8"/><path d="M14.5 2 V13 Q14.5 14.5 13 14.5 H2" fill="none" stroke="#8e8c8e"/><path d="M4.7 1.8 H12 L14.1 3.9 V13.7 H4.7 Z" fill="#fff" stroke="#1c1c1c" stroke-width="1.1"/><path d="M11.8 1.8 V4.1 H14.1" fill="none" stroke="#1c1c1c" stroke-width="0.9"/><path d="M2.2 7 H8.1 V4.9 L12.3 8.5 L8.1 12.1 V10 H2.2 Z" fill="#0a6a0a"/></svg>
<div class="t" style="left:30.70px;top:496.80px;font-size:13.5px;line-height:16px;">2</div>
<div class="chk" style="left:43px;top:500.4px"></div>
<div class="sel" style="left:60.3px;top:497.2px;width:172.4px;height:21.2px;background:#efefef"></div>
<div class="t" style="left:62.60px;top:500.80px;font-size:13.5px;line-height:16px;letter-spacing:-0.502px;">1-2</div>
<div class="sel" style="left:234.2px;top:497.2px;width:172.6px;height:21.2px;background:#fff"></div>
<div class="t" style="left:237.10px;top:500.80px;font-size:13.5px;line-height:16px;letter-spacing:-0.261px;width:168.10px;overflow:hidden;">Wartung Schnittstellen lt. Angebot</div>
<div class="sel" style="left:408.3px;top:497.2px;width:94.3px;height:21.2px;background:#fff"></div>
<div class="t" style="left:462.90px;top:500.80px;font-size:13.5px;line-height:16px;letter-spacing:-0.917px;">260,00</div>
<div class="t" style="left:506.70px;top:502.80px;font-size:13.5px;line-height:16px;letter-spacing:-1.227px;">EUR</div>
<div class="sel" style="left:535.3px;top:497.2px;width:94.6px;height:21.2px;background:#fff"></div>
<div class="t" style="left:634.20px;top:502.80px;font-size:13.5px;line-height:16px;letter-spacing:-1.277px;">EUR</div>
<div style="position:absolute;left:579px;top:70.3px;width:75.8px;height:14.6px;box-sizing:border-box;border:1px solid #000;background:#ffffe1"></div>
<div class="t" style="left:582.30px;top:70.80px;font-size:11px;line-height:13px;transform-origin:0 0;transform:scaleX(0.8358);-webkit-text-stroke:0.3px #000;">Aktion ausführen</div>
<svg style="position:absolute;left:577.8px;top:51.8px" width="17.7" height="22.9" viewBox="0 0 17 22" preserveAspectRatio="none"><path d="M4.5 1.6 Q4.5 0.5 6 0.5 Q7.5 0.5 7.5 1.6 V6 L9.3 5.7 Q10.5 5.9 10.5 7 L12.3 6.9 Q13.5 7.3 13.5 8.3 L15 8.5 Q16.5 9 16.5 10.5 V14 Q16.4 16.4 15.2 18 L14.3 21.5 H5.6 L5.2 19.4 L2 14.2 L0.8 11.2 Q0.4 9.3 2 9.3 Q3.4 9.5 4.5 11.6 Z" fill="#fff" stroke="#000" stroke-width="1" stroke-linejoin="round"/><path d="M7.5 6 V10.4 M10.5 7 V10.4 M13.5 8.3 V10.8" fill="none" stroke="#000" stroke-width="0.9"/></svg>
</body></html>
